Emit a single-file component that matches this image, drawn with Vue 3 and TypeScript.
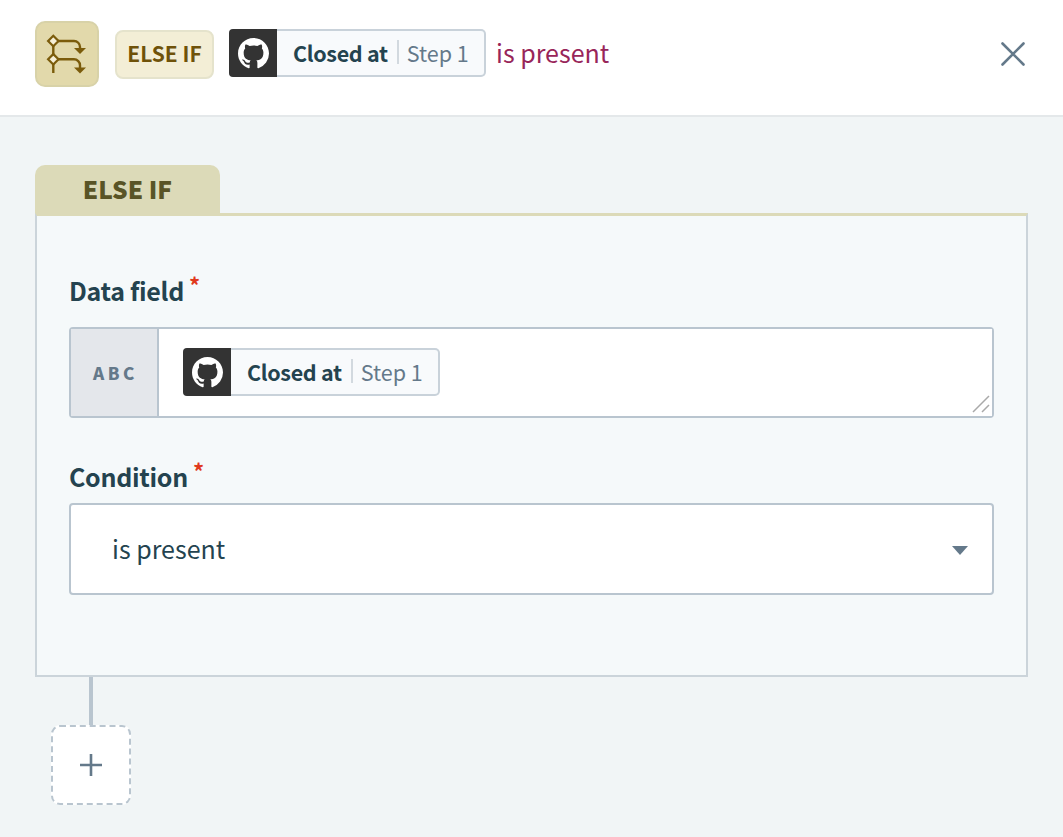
<template>
  <div class="page">
    <header class="top-bar">
      <div class="step-icon">
        <svg width="44" height="44" viewBox="0 0 44 44" fill="none">
          <path d="M8.300 9V41" class="line" />
          <path d="M8.300 9H29a6 6 0 0 1 6 6V17" class="line" />
          <path d="M8.300 27.300H29a6 6 0 0 1 6 6V36" class="line" />
          <path d="M29 16h12l-6 6z" class="fill" />
          <path d="M29 35.500h12l-6 6z" class="fill" />
          <path d="M8.300 3.800l5.200 5.200-5.200 5.200-5.200-5.200z" class="diamond" />
          <path d="M8.300 22.100l5.200 5.200-5.200 5.200-5.200-5.200z" class="diamond" />
        </svg>
      </div>
      <span class="else-tag">ELSE IF</span>
      <div class="pill">
        <span class="pill-logo">
          <svg width="31" height="31" viewBox="0 0 16 16" fill="#fff">
            <path :d="githubPath" />
          </svg>
        </span>
        <span class="pill-text"><b>{{ fieldName }}</b><i></i><span>{{ stepName }}</span></span>
      </div>
      <span class="summary">{{ condition }}</span>
      <button class="close-btn" aria-label="Close">
        <svg width="26" height="26" viewBox="0 0 26 26">
          <path d="M2.500 2.500l21 21M23.500 2.500l-21 21" stroke="#64798a" stroke-width="2.600" stroke-linecap="round" />
        </svg>
      </button>
    </header>

    <main class="content">
      <div class="tab">ELSE IF</div>
      <section class="panel">
        <label class="field-label">Data field<sup>*</sup></label>
        <div class="data-input">
          <div class="type-box">ABC</div>
          <div class="data-value">
            <div class="pill">
              <span class="pill-logo">
                <svg width="31" height="31" viewBox="0 0 16 16" fill="#fff">
                  <path :d="githubPath" />
                </svg>
              </span>
              <span class="pill-text"><b>{{ fieldName }}</b><i></i><span>{{ stepName }}</span></span>
            </div>
            <svg class="resizer" width="18" height="18" viewBox="0 0 18 18">
              <path d="M1 17L17 1M10 17l7-7" stroke="#a9a9a9" stroke-width="1.500" />
            </svg>
          </div>
        </div>
        <label class="field-label second">Condition<sup>*</sup></label>
        <div class="select-box">
          <span class="select-value">{{ condition }}</span>
          <svg class="caret" width="16" height="9" viewBox="0 0 16 9"><path d="M0 0h16l-8 9z" fill="#64798a" /></svg>
        </div>
      </section>
      <div class="connector"></div>
      <button class="add-btn" aria-label="Add step">
        <svg width="24" height="24" viewBox="0 0 24 24">
          <path d="M12 1v22M1 12h22" stroke="#64798a" stroke-width="2.600" />
        </svg>
      </button>
    </main>
  </div>
</template>

<script setup lang="ts">
const fieldName = 'Closed at'
const stepName = 'Step 1'
const condition = 'is present'

const githubPath =
  'M8 0C3.58 0 0 3.58 0 8c0 3.54 2.29 6.53 5.47 7.59.4.07.55-.17.55-.38 0-.19-.01-.82-.01-1.49-2.01.37-2.53-.49-2.69-.94-.09-.23-.48-.94-.82-1.13-.28-.15-.68-.52-.01-.53.63-.01 1.08.58 1.23.82.72 1.21 1.87.87 2.33.66.07-.52.28-.87.51-1.07-1.78-.2-3.64-.89-3.64-3.95 0-.87.31-1.59.82-2.15-.08-.2-.36-1.02.08-2.12 0 0 .67-.21 2.2.82.64-.18 1.32-.27 2-.27s1.36.09 2 .27c1.53-1.04 2.2-.82 2.2-.82.44 1.1.16 1.92.08 2.12.51.56.82 1.27.82 2.15 0 3.07-1.87 3.75-3.65 3.95.29.25.54.73.54 1.48 0 1.07-.01 1.93-.01 2.2 0 .21.15.46.55.38A8.01 8.01 0 0 0 16 8c0-4.42-3.58-8-8-8z'
</script>

<style>
html,
body {
  margin: 0;
  background: #f1f5f6;
}
</style>

<style scoped>
.page {
  width: 1063px;
  height: 837px;
  overflow: hidden;
  background: #f1f5f6;
  color: #24434f;
  font-family: "Noto Sans CJK SC", "Noto Sans", sans-serif;
}

.top-bar {
  display: flex;
  align-items: center;
  height: 117px;
  padding: 0 37px 7px 35px;
  box-sizing: border-box;
  background: #fff;
  border-bottom: 2px solid #e4e8ea;
}

.step-icon {
  display: flex;
  align-items: center;
  justify-content: center;
  width: 64px;
  height: 66px;
  box-sizing: border-box;
  background: #e2d9ab;
  border: 2px solid #d8d2a8;
  border-radius: 10px;
}

.line {
  stroke: #7b5c0b;
  stroke-width: 2.400;
}

.fill {
  fill: #7b5c0b;
}

.diamond {
  fill: #f5efd6;
  stroke: #7b5c0b;
  stroke-width: 2.200;
}

.else-tag {
  display: flex;
  align-items: center;
  justify-content: center;
  width: 99px;
  height: 49px;
  margin-left: 16px;
  padding-bottom: 2px;
  box-sizing: border-box;
  background: #f3eed6;
  border: 2px solid #e5e3cc;
  border-radius: 8px;
  color: #6f5209;
  font-size: 21px;
  font-weight: 700;
}

.top-bar .pill {
  margin-left: 15px;
  margin-top: -2px;
}

.pill {
  display: flex;
  width: 257px;
  height: 48px;
  box-sizing: border-box;
  background: #f8fafc;
  border: 2px solid #c9d2da;
  border-left: 0;
  border-radius: 5px;
}

.pill-logo {
  display: flex;
  align-items: center;
  justify-content: center;
  width: 48px;
  height: 48px;
  margin-top: -2px;
  background: #333;
  border-radius: 4px 0 0 4px;
}

.pill-text {
  display: flex;
  align-items: center;
  height: 42px;
  padding-left: 16px;
  font-size: 21.500px;
  white-space: nowrap;
}

.pill-text b {
  font-weight: 600;
  letter-spacing: -0.3px;
}

.pill-text i {
  width: 2px;
  height: 24px;
  margin: 0 8px 0 9px;
  background: #d2d9df;
}

.pill-text span {
  color: #64798a;
}

.summary {
  margin-left: 10px;
  margin-top: -4px;
  color: #982559;
  font-size: 25px;
}

.close-btn {
  display: flex;
  margin-left: auto;
  padding: 0;
  background: none;
  border: 0;
}

.content {
  padding: 48px 35px 0;
}

.tab {
  width: 185px;
  height: 51px;
  margin-bottom: -3px;
  background: #dcdab8;
  border-radius: 10px 10px 0 0;
  color: #595426;
  font-size: 24.500px;
  font-weight: 900;
  line-height: 48px;
  text-align: center;
}

.panel {
  position: relative;
  width: 993px;
  height: 464px;
  padding: 55px 32px 0;
  box-sizing: border-box;
  background: #f5f9fa;
  border: 2px solid #cbd4da;
  border-top: 3px solid #dcdab8;
}

.field-label {
  display: block;
  height: 38px;
  color: #24434f;
  font-size: 25px;
  font-weight: 600;
  letter-spacing: -0.3px;
  line-height: 38px;
}

.field-label sup {
  position: relative;
  top: -7px;
  margin-left: 5px;
  color: #e0391c;
  font-size: 22px;
  line-height: 0;
  vertical-align: baseline;
}

.second {
  margin-top: 39px;
}

.data-input {
  display: flex;
  height: 91px;
  margin-top: 18px;
  box-sizing: border-box;
  border: 2px solid #b9c5cf;
  border-radius: 4px;
}

.type-box {
  width: 88px;
  padding-left: 3px;
  box-sizing: border-box;
  background: #e4e7eb;
  border-right: 2px solid #b9c5cf;
  color: #64798a;
  font-size: 17px;
  font-weight: 900;
  letter-spacing: 3.500px;
  line-height: 87px;
  text-align: center;
}

.data-value {
  position: relative;
  flex: 1;
  padding: 19px 0 0 24px;
  background: #fff;
}

.resizer {
  position: absolute;
  right: 2px;
  bottom: 3px;
}

.select-box {
  display: flex;
  align-items: center;
  justify-content: space-between;
  height: 92px;
  margin-top: 8px;
  padding: 0 24px 0 41px;
  box-sizing: border-box;
  background: #fff;
  border: 2px solid #b9c5cf;
  border-radius: 4px;
  font-size: 25px;
}

.select-value {
  margin-top: -2px;
}

.caret {
  margin-top: 2px;
}

.connector {
  width: 4px;
  height: 48px;
  margin-left: 54px;
  background: #b9c5cf;
}

.add-btn {
  display: flex;
  align-items: center;
  justify-content: center;
  width: 80px;
  height: 80px;
  margin-left: 16px;
  padding: 0;
  box-sizing: border-box;
  background: #fff;
  border: 2px dashed #b9c5cf;
  border-radius: 9px;
}
</style>
